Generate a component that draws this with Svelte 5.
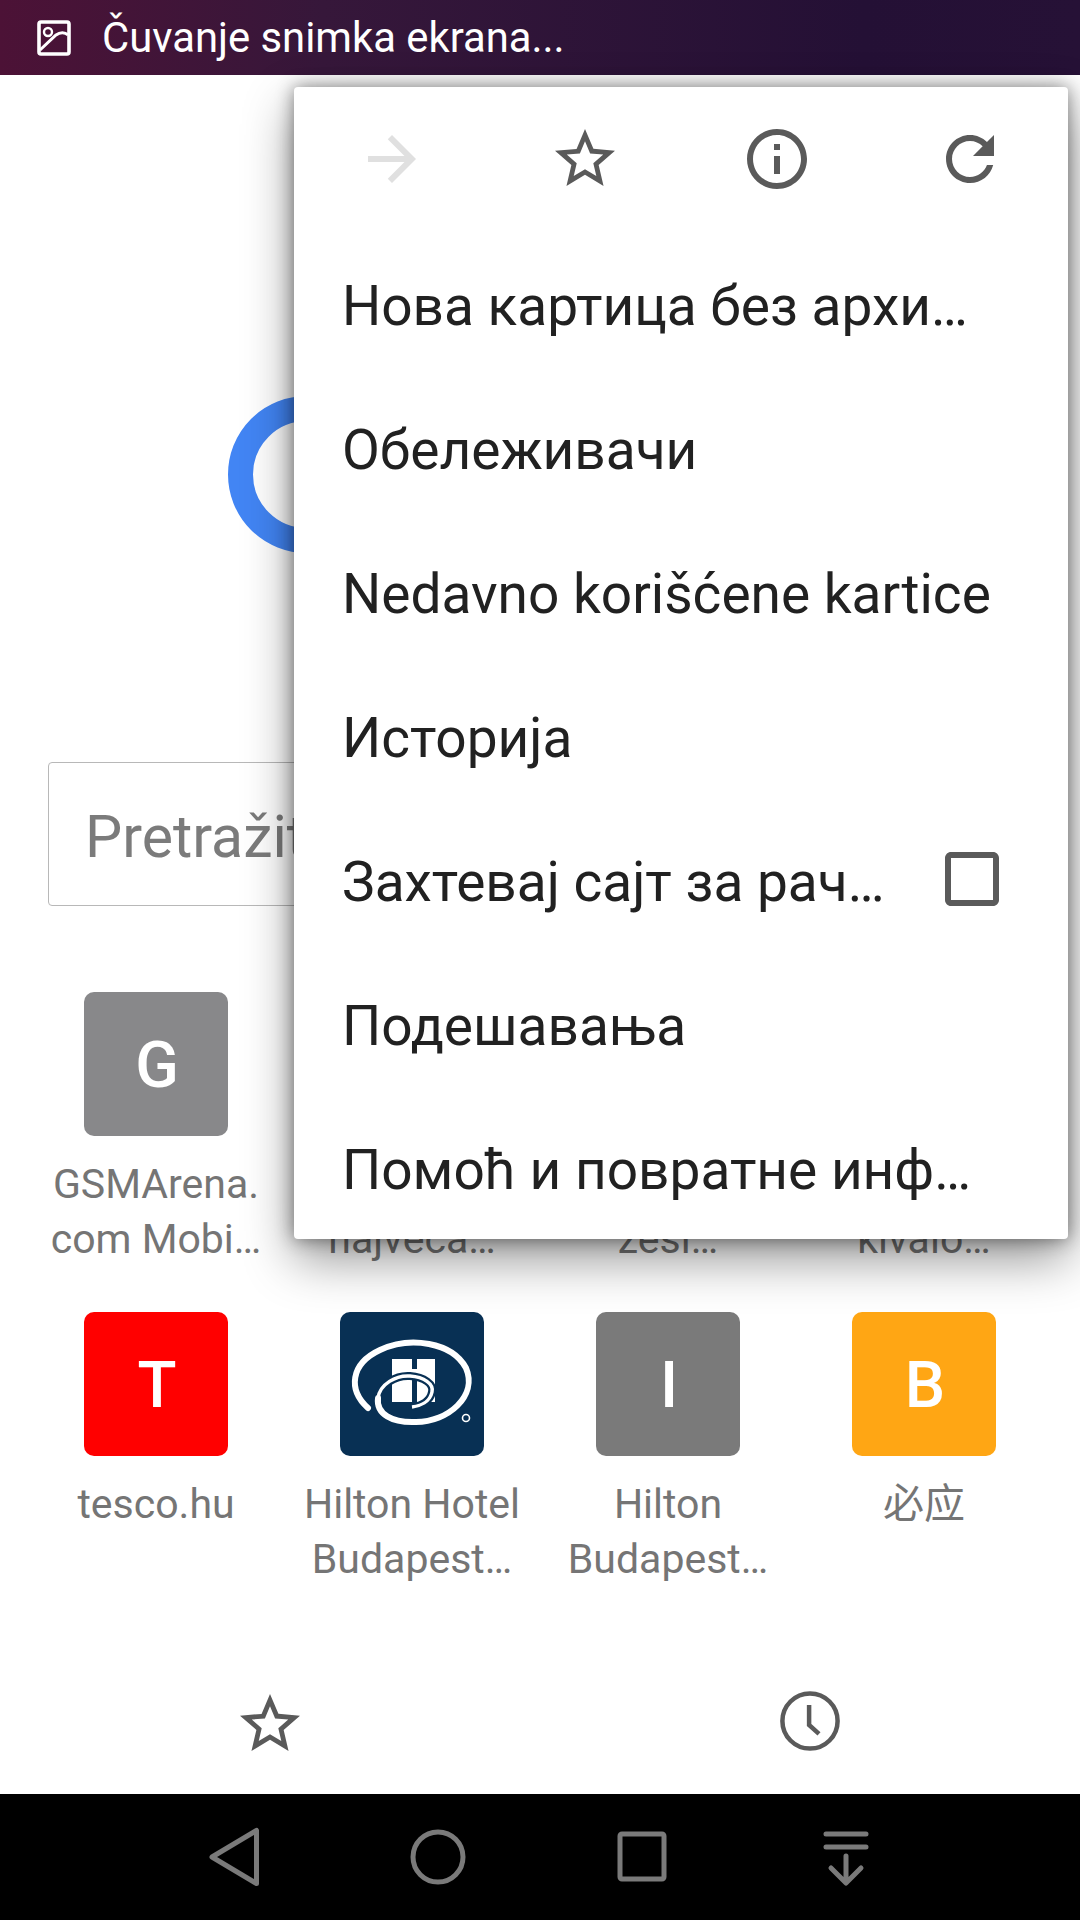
<script>
  const tools = [
    { d: 'M12 4l-1.41 1.41L16.17 11H4v2h12.17l-5.58 5.59L12 20l8-8z', off: true },
    { d: 'M22 9.24l-7.19-.62L12 2 9.19 8.63 2 9.24l5.46 4.73L5.82 21 12 17.27 18.18 21l-1.63-7.03L22 9.24zM12 15.4l-3.76 2.27 1-4.28-3.32-2.88 4.38-.38L12 6.1l1.71 4.04 4.38.38-3.32 2.88 1 4.28L12 15.4z' },
    { d: 'M11 7h2v2h-2zm0 4h2v6h-2zm1-9C6.48 2 2 6.48 2 12s4.48 10 10 10 10-4.48 10-10S17.52 2 12 2zm0 18c-4.41 0-8-3.59-8-8s3.59-8 8-8 8 3.59 8 8-3.59 8-8 8z' },
    { d: 'M17.65 6.35C16.2 4.9 14.21 4 12 4c-4.42 0-7.99 3.58-7.99 8s3.57 8 7.99 8c3.73 0 6.84-2.55 7.73-6h-2.08c-.82 2.33-3.04 4-5.65 4-3.31 0-6-2.69-6-6s2.69-6 6-6c1.66 0 3.14.69 4.22 1.78L13 11h7V4l-2.35 2.35z' }
  ];

  const items = [
    { label: 'Нова картица без архивирања' },
    { label: 'Обележивачи' },
    { label: 'Nedavno korišćene kartice' },
    { label: 'Историја' },
    { label: 'Захтевај сајт за рачунар', check: true },
    { label: 'Подешавања' },
    { label: 'Помоћ и повратне информације' }
  ];

  const tiles = [
    { letter: 'G', color: '#88888a', lines: ['GSMArena.', 'com Mobi…'] },
    { color: '#7a7a7a', lines: ['\u00a0', 'najveća…'] },
    { color: '#7a7a7a', lines: ['\u00a0', 'zesi…'] },
    { color: '#7a7a7a', lines: ['\u00a0', 'kivalo…'] },
    { letter: 'T', color: '#ff0000', lines: ['tesco.hu'] },
    { logo: true, color: '#083054', lines: ['Hilton Hotel', 'Budapest…'] },
    { letter: 'I', color: '#7a7a7a', lines: ['Hilton', 'Budapest…'] },
    { letter: 'B', color: '#ffa614', lines: ['必应'] }
  ];
</script>

<div class="page">
  <div class="status">
    <svg class="shot" viewBox="0 0 34 36" width="34" height="36">
      <rect x="2" y="2" width="30" height="32" rx="2" fill="none" stroke="#fff" stroke-width="3.6" />
      <circle cx="11" cy="12" r="4" fill="none" stroke="#fff" stroke-width="2.4" />
      <path d="M3 30L19 15c4-3 9-3 12 0" fill="none" stroke="#fff" stroke-width="3" />
    </svg>
    <span>Čuvanje snimka ekrana...</span>
  </div>

  <main>
    <div class="ring"></div>
    <div class="search">Pretražite ili unesite adresu</div>

    <div class="grid">
      {#each tiles as t}
        <div class="tile">
          <div class="thumb" style="background: {t.color}">
            {#if t.logo}
              <svg viewBox="0 0 144 144" width="144" height="144">
                <path d="M52 47h20v43H52zM77 47h18v43H77zM70 57h9v6h-9z" fill="#fff" />
                <path d="M38 86C40 72 56 63 70 64C84 65 94 72 92 80C90 90 80 94 72 95" fill="none" stroke="#083054" stroke-width="8" />
                <path d="M38 86C40 72 56 63 70 64C84 65 94 72 92 80C90 90 80 94 72 95" fill="none" stroke="#fff" stroke-width="3.5" />
                <path d="M28 96C8 78 10 52 40 38C70 24 112 30 126 56C138 84 108 110 76 110C52 111 36 102 38 86" fill="none" stroke="#fff" stroke-width="6" stroke-linecap="round" />
                <circle cx="126" cy="106" r="3.5" fill="none" stroke="#fff" stroke-width="1.6" />
              </svg>
            {:else}
              <span class="letter">{t.letter ?? ''}</span>
            {/if}
          </div>
          <div class="label">
            {#each t.lines as line}
              <div>{line}</div>
            {/each}
          </div>
        </div>
      {/each}
    </div>

    <div class="shortcuts">
      <svg class="star" viewBox="0 0 24 24" width="72" height="72"><path d={tools[1].d} /></svg>
      <svg class="clock" viewBox="0 0 24 24" width="72" height="72">
        <circle cx="12" cy="12" r="9.2" />
        <path d="M11.700 6.700v6.600l3.300 3" />
      </svg>
    </div>
  </main>

  <nav>
    <svg viewBox="0 0 60 60" width="60" height="60"><path d="M52.500 3.500v53L8 30z" /></svg>
    <svg viewBox="0 0 60 60" width="60" height="60"><circle cx="30" cy="30" r="25" /></svg>
    <svg viewBox="0 0 60 60" width="60" height="60"><rect x="8" y="7" width="44" height="45" rx="2" /></svg>
    <svg viewBox="0 0 60 60" width="60" height="60">
      <path d="M10 7h40M10 20h40M30 29v26M15 41l15 15 15-15" />
    </svg>
  </nav>

  <div class="menu">
    <div class="tools">
      {#each tools as t}
        <svg class:off={t.off} viewBox="0 0 24 24" width="72" height="72"><path d={t.d} /></svg>
      {/each}
    </div>
    {#each items as item}
      <div class="item">
        <span class="text">{item.label}</span>
        {#if item.check}
          <svg class="check" viewBox="0 0 24 24" width="72" height="72"><path d="M19 5v14H5V5h14m0-2H5c-1.100 0-2 .9-2 2v14c0 1.100.9 2 2 2h14c1.100 0 2-.9 2-2V5c0-1.100-.9-2-2-2z" /></svg>
        {/if}
      </div>
    {/each}
  </div>
</div>

<style>
  :global(body) { margin: 0; background: #fff; }

  .page {
    position: relative;
    width: 1080px;
    height: 1920px;
    display: flex;
    flex-direction: column;
    overflow: hidden;
    font-family: Roboto, "Noto Sans CJK SC", sans-serif;
    background: #fff;
  }

  .status {
    height: 75px;
    flex: none;
    display: flex;
    align-items: center;
    padding-left: 37px;
    color: #fff;
    font-size: 41.8px;
    background: linear-gradient(90deg, #4c1236 0%, #36173a 30%, #241035 80%, #261136 100%);
  }
  .shot { margin-right: 31px; }

  main {
    flex: 1;
    display: flex;
    flex-direction: column;
  }

  .ring {
    width: 107px;
    height: 107px;
    margin: 321px 0 0 228px;
    border: 25px solid #4285f4;
    border-radius: 50%;
  }

  .search {
    height: 138px;
    margin: 209px 48px 0;
    padding: 4px 0 0 36px;
    border: 1px solid #b8b8b8;
    border-radius: 4px;
    display: flex;
    align-items: center;
    font-size: 59px;
    color: #7b7b7b;
    white-space: nowrap;
    overflow: hidden;
  }

  .grid {
    margin-top: 86px;
    padding: 0 28px;
    display: grid;
    grid-template-columns: repeat(4, 256px);
    grid-auto-rows: 320px;
  }
  .tile {
    display: flex;
    flex-direction: column;
    align-items: center;
  }
  .thumb {
    width: 144px;
    height: 144px;
    border-radius: 10px;
    display: flex;
    align-items: center;
    justify-content: center;
    color: #fff;
    font-size: 64px;
    font-weight: 500;
  }
  .letter { padding: 3px 0 0 2px; }
  .label {
    margin-top: 21px;
    font-size: 41px;
    line-height: 55px;
    color: #757575;
    text-align: center;
    white-space: nowrap;
  }

  .shortcuts {
    margin-top: auto;
    margin-bottom: 34px;
    display: grid;
    grid-template-columns: 1fr 1fr;
    justify-items: center;
  }
  .star path { fill: #5a5a5a; }
  .clock { fill: none; stroke: #5a5a5a; stroke-width: 1.5; margin-top: -3px; }

  nav {
    height: 126px;
    flex: none;
    background: #000;
    display: grid;
    grid-template-columns: repeat(4, 204px);
    justify-items: center;
    align-items: center;
    padding: 0 132px;
  }
  nav svg { fill: none; stroke: #7a7a7a; stroke-width: 5; stroke-linejoin: round; stroke-linecap: round; }

  .menu {
    position: absolute;
    top: 87px;
    left: 294px;
    width: 774px;
    background: #fff;
    border-radius: 4px;
    box-shadow: 0 20px 50px rgba(0, 0, 0, 0.42), 0 0 18px rgba(0, 0, 0, 0.45);
  }
  .tools {
    height: 144px;
    padding: 0 2px;
    display: grid;
    grid-template-columns: repeat(4, 1fr);
    justify-items: center;
    align-items: center;
  }
  .tools path, .item path { fill: #5a5a5a; }
  .tools .off path { fill: #e0e0e0; }

  .item {
    height: 144px;
    padding: 0 60px 0 48px;
    display: flex;
    align-items: center;
    font-size: 55px;
    color: #212121;
  }
  .text {
    flex: 1;
    min-width: 0;
    white-space: nowrap;
    overflow: hidden;
    text-overflow: ellipsis;
    padding: 5px 16px 0 0;
  }
  .check { margin-left: 20px; }
</style>
